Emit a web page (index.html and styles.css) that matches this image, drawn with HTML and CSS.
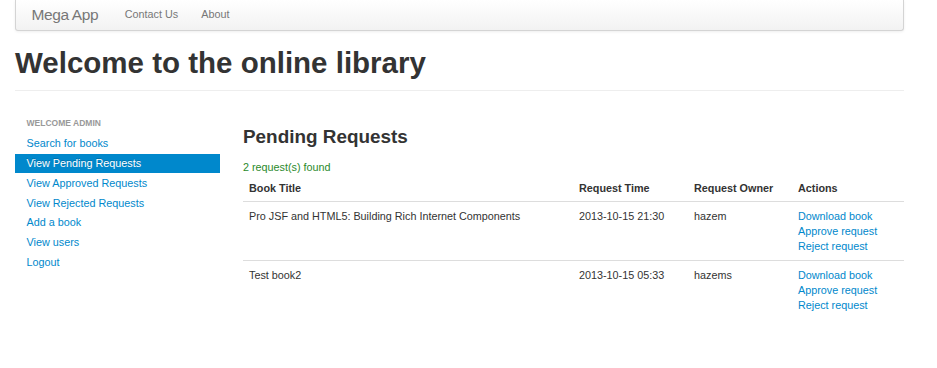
FILE: index.html
```html
<!DOCTYPE html>
<html lang="en">
<head>
  <meta charset="UTF-8">
  <meta name="viewport" content="width=device-width, initial-scale=1.0">
  <title>Mega App - Online Library</title>
  <link rel="stylesheet" href="styles.css">
</head>
<body>
  <div class="navbar">
    <div class="navbar-inner">
      <a class="brand" href="#">Mega App</a>
      <ul class="nav">
        <li><a href="#">Contact Us</a></li>
        <li><a href="#">About</a></li>
      </ul>
    </div>
  </div>

  <div class="page-header">
    <h1>Welcome to the online library</h1>
  </div>

  <div class="row-fluid">
    <div class="span3">
      <ul class="nav-list">
        <li class="nav-header">Welcome admin</li>
        <li><a href="#">Search for books</a></li>
        <li class="active"><a href="#">View Pending Requests</a></li>
        <li><a href="#">View Approved Requests</a></li>
        <li><a href="#">View Rejected Requests</a></li>
        <li><a href="#">Add a book</a></li>
        <li><a href="#">View users</a></li>
        <li><a href="#">Logout</a></li>
      </ul>
    </div>

    <div class="span9">
      <h3>Pending Requests</h3>
      <div class="text-success">2 request(s) found</div>
      <table class="table">
        <thead>
          <tr>
            <th class="col-title">Book Title</th>
            <th class="col-time">Request Time</th>
            <th class="col-owner">Request Owner</th>
            <th class="col-actions">Actions</th>
          </tr>
        </thead>
        <tbody>
          <tr>
            <td>Pro JSF and HTML5: Building Rich Internet Components</td>
            <td>2013-10-15 21:30</td>
            <td>hazem</td>
            <td class="actions">
              <a href="#">Download book</a>
              <a href="#">Approve request</a>
              <a href="#">Reject request</a>
            </td>
          </tr>
          <tr>
            <td>Test book2</td>
            <td>2013-10-15 05:33</td>
            <td>hazems</td>
            <td class="actions">
              <a href="#">Download book</a>
              <a href="#">Approve request</a>
              <a href="#">Reject request</a>
            </td>
          </tr>
        </tbody>
      </table>
    </div>
  </div>
</body>
</html>
```
FILE: styles.css
```css
    body {
      margin: 0;
      padding: 0 33px 0 15px;
      font-family: "Liberation Sans", Arial, Helvetica, sans-serif;
      font-size: 10.8px;
      line-height: 15.5px;
      color: #333333;
      background-color: #ffffff;
    }
    a {
      color: #0088cc;
      text-decoration: none;
    }

/*---------------------------------- NAVBAR ----------------------------------*/
    .navbar {
      margin-bottom: 15.5px;
    }
    .navbar-inner {
      display: flex;
      align-items: center;
      height: 30px;
      padding: 0 15.5px;
      background: linear-gradient(to bottom, #ffffff, #f2f2f2);
      border: 1px solid #d4d4d4;
      border-top: 0;
      border-radius: 0 0 3px 3px;
      box-shadow: 0 1px 3px rgba(0, 0, 0, 0.065);
    }
    .brand {
      margin-left: -15.5px;
      padding: 0 15px 0 15.5px;
      font-size: 15.5px;
      letter-spacing: -0.4px;
      color: #777777;
    }
    .nav {
      display: flex;
      margin: 0;
      padding: 0;
      list-style: none;
    }
    .nav a {
      display: block;
      padding: 0 11.6px;
      color: #777777;
    }

/*---------------------------------- HEADER ----------------------------------*/
    .page-header {
      margin: 15.5px 0 23px;
      padding-bottom: 5px;
      border-bottom: 1px solid #eeeeee;
    }
    .page-header h1 {
      margin: 0 0 7.7px;
      font-size: 29.5px;
      line-height: 31px;
      font-weight: bold;
      color: #333333;
    }

/*---------------------------------- LAYOUT ----------------------------------*/
    .row-fluid {
      display: flex;
      gap: 23px;
    }
    .span3 {
      width: 205px;
      flex-shrink: 0;
    }
    .span9 {
      flex: 1;
    }

/*---------------------------------- SIDEBAR ----------------------------------*/
    .nav-list {
      margin: 0;
      padding: 0 11.6px;
      list-style: none;
    }
    .nav-list li {
      line-height: 15.3px;
    }
    .nav-list .nav-header {
      padding: 2.2px 0;
      font-size: 8.5px;
      font-weight: bold;
      text-transform: uppercase;
      color: #999999;
      text-shadow: 0 1px 0 rgba(255, 255, 255, 0.5);
    }
    .nav-list a {
      display: block;
      margin: 0 -11.6px;
      padding: 2.25px 11.6px;
    }
    .nav-list .active a {
      color: #ffffff;
      background-color: #0088cc;
      text-shadow: 0 -1px 0 rgba(0, 0, 0, 0.2);
    }

/*---------------------------------- CONTENT ----------------------------------*/
    .span9 h3 {
      margin: 7px 0 7.7px;
      font-size: 18.9px;
      line-height: 31px;
      font-weight: bold;
      color: #333333;
    }
    .text-success {
      color: #2b8a2b;
    }
    .table {
      width: 100%;
      border-collapse: collapse;
      border-spacing: 0;
    }
    .table th,
    .table td {
      padding: 7px 6px 5px;
      text-align: left;
      vertical-align: top;
      line-height: 15.3px;
    }
    .table th {
      padding: 6px 6px 4px;
      font-weight: bold;
    }
    .table td {
      border-top: 1px solid #dddddd;
    }
    .col-title { width: 318px; }
    .col-time { width: 103px; }
    .col-owner { width: 92px; }
    .table .actions a {
      display: block;
    }
```
